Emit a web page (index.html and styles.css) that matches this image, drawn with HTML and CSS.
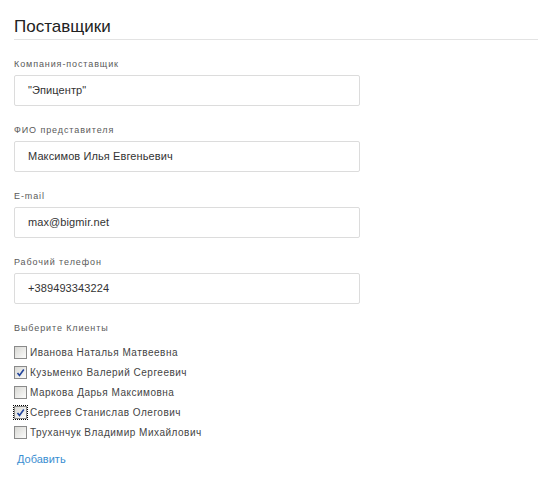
FILE: index.html
```html
<!DOCTYPE html>
<html lang="ru">
<head>
<meta charset="utf-8">
<title>Поставщики</title>
<link rel="stylesheet" href="styles.css">
</head>
<body>
<div class="page">
  <h2 class="title">Поставщики</h2>
  <form class="form">
    <div class="group">
      <label class="lbl">Компания-поставщик</label>
      <div class="field">"Эпицентр"</div>
    </div>
    <div class="group">
      <label class="lbl">ФИО представителя</label>
      <div class="field">Максимов Илья Евгеньевич</div>
    </div>
    <div class="group">
      <label class="lbl">E-mail</label>
      <div class="field">max@bigmir.net</div>
    </div>
    <div class="group">
      <label class="lbl">Рабочий телефон</label>
      <div class="field">+389493343224</div>
    </div>
    <div class="clients">
      <div class="lbl">Выберите Клиенты</div>
      <ul class="checks">
        <li class="row"><span class="cb"></span><span class="name">Иванова Наталья Матвеевна</span></li>
        <li class="row"><span class="cb"><svg viewBox="0 0 13 13" width="13" height="13"><path d="M3.5 7 L5.5 9.5 L9.8 3.5" fill="none" stroke="#22449c" stroke-width="1.6"/></svg></span><span class="name">Кузьменко Валерий Сергеевич</span></li>
        <li class="row"><span class="cb"></span><span class="name">Маркова Дарья Максимовна</span></li>
        <li class="row"><span class="cb focus"><svg viewBox="0 0 13 13" width="13" height="13"><path d="M3.5 7 L5.5 9.5 L9.8 3.5" fill="none" stroke="#22449c" stroke-width="1.6"/></svg></span><span class="name">Сергеев Станислав Олегович</span></li>
        <li class="row"><span class="cb"></span><span class="name">Труханчук Владимир Михайлович</span></li>
      </ul>
      <a class="add" href="#">Добавить</a>
    </div>
  </form>
</div>
</body>
</html>
```
FILE: styles.css
```css
html, body {
  margin: 0;
  padding: 0;
  background: #fff;
}
body {
  font-family: "Liberation Sans", Arial, sans-serif;
  color: #333;
}
.page {
  padding: 17px 1px 0 14px;
}
.title {
  margin: 0;
  font-size: 17px;
  font-weight: normal;
  line-height: 20px;
  color: #222;
  padding-bottom: 2px;
  border-bottom: 1px solid #e3e3e3;
}
.form {
  padding-top: 18px;
  width: 346px;
}
.group {
  margin-bottom: 18px;
}
.lbl {
  display: block;
  font-size: 9px;
  line-height: 12px;
  letter-spacing: 0.9px;
  color: #5a5a5a;
  margin-bottom: 5px;
}
.field {
  box-sizing: border-box;
  height: 31px;
  border: 1px solid #dcdcdc;
  border-radius: 2px;
  padding: 0 13px;
  font-size: 11px;
  letter-spacing: 0.1px;
  line-height: 29px;
  color: #333;
}
.clients .lbl {
  margin-bottom: 8px;
}
.checks {
  list-style: none;
  margin: 0;
  padding: 0;
}
.row {
  display: flex;
  align-items: center;
  height: 20px;
}
.cb {
  box-sizing: border-box;
  width: 13px;
  height: 13px;
  border: 1px solid #8a8a8a;
  background: linear-gradient(135deg, #d8d8d4 0%, #ededeb 60%, #fbfbfb 100%);
  margin-right: 3px;
  position: relative;
  flex: none;
}
.cb svg {
  position: absolute;
  left: -1px;
  top: -1px;
}
.cb.focus {
  outline: 1px dotted #000;
  outline-offset: 0;
}
.name {
  font-size: 10px;
  letter-spacing: 0.5px;
  color: #444;
}
.add {
  display: inline-block;
  margin-top: 10px;
  margin-left: 3px;
  font-size: 11px;
  line-height: 14px;
  color: #3a8ed1;
  text-decoration: none;
}
```
